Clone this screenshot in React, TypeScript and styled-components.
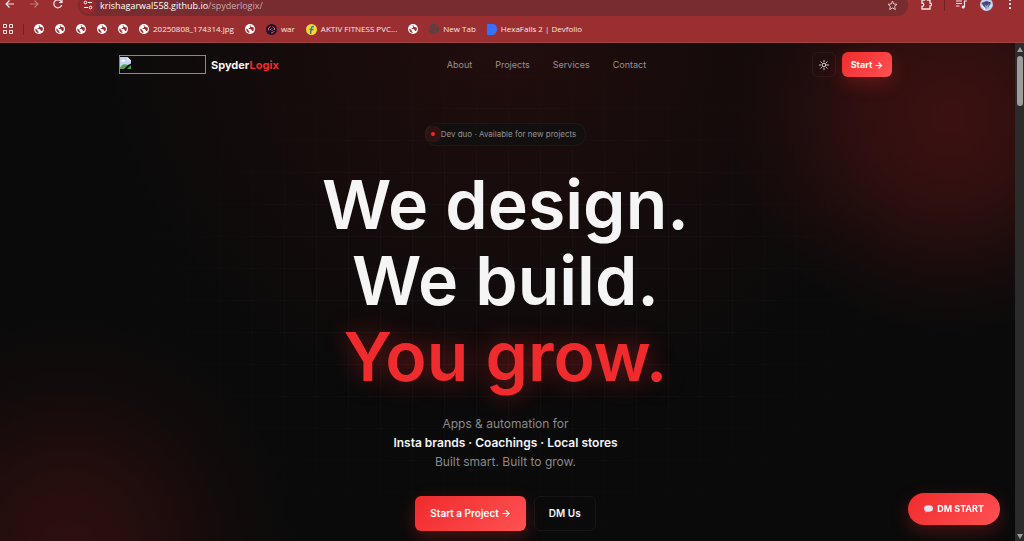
import React from "react";
import styled, { createGlobalStyle, css } from "styled-components";

const GlobalStyle = createGlobalStyle`
  * { box-sizing: border-box; }
  body { margin: 0; background: #0a0a0a; overflow: hidden; }
  button { border: 0; margin: 0; padding: 0; background: none; color: inherit; font: inherit; cursor: pointer; }
  a { color: inherit; text-decoration: none; }
  svg { display: block; flex: none; }
`;

const Window = styled.div`
  min-height: 100vh;
  display: flex;
  flex-direction: column;
  font-family: Inter, "Liberation Sans", sans-serif;
`;

/* Browser chrome */

const Chrome = styled.header`
  background: #9b2e30;
  color: #f8e6e6;
  border-bottom: 1px solid #9c4544;
  font-family: "Open Sans", "Noto Sans", sans-serif;
`;

const AddressRow = styled.div`
  display: flex;
  align-items: flex-end;
  height: 16px;
  overflow: hidden;
  padding: 0 12px 0 5px;
`;

const ToolButton = styled.button<{ $dim?: boolean; $gap?: number }>`
  display: flex;
  align-items: center;
  height: 24px;
  margin-right: ${(p) => p.$gap ?? 0}px;
  opacity: ${(p) => (p.$dim ? 0.4 : 1)};
`;

const AddressBar = styled.div`
  flex: 1;
  display: flex;
  align-items: center;
  gap: 4px;
  height: 22px;
  margin-right: 13px;
  padding: 0 10px 0 2px;
  border-radius: 11px;
  background: #782c2f;
`;

const SiteInfo = styled.button`
  display: grid;
  place-items: center;
  width: 16px;
  height: 18px;
  border-radius: 9px;
  background: #97292c;
`;

const Url = styled.div`
  flex: 1;
  padding-top: 2px;
  font-size: 9px;
  line-height: 10px;
  color: #ffffff;

  span { color: #cfa9aa; }
`;

const Divider = styled.i`
  width: 1px;
  height: 11px;
  background: #6f2023;
`;

const ToolDivider = styled(Divider)`
  align-self: flex-start;
  margin: 0 11px;
`;

const Bookmarks = styled.nav`
  display: flex;
  align-items: center;
  gap: 10px;
  height: 26px;
  padding: 0 3px;
`;

const BookmarkList = styled.div`
  display: flex;
  align-items: center;
  gap: 11px;
`;

const Bookmark = styled.a`
  display: flex;
  align-items: center;
  gap: 4px;
  font-size: 8px;
  line-height: 12px;
  white-space: nowrap;
`;

/* Page */

const Viewport = styled.div`
  flex: 1;
  display: flex;
`;

const Page = styled.div`
  flex: 1;
  position: relative;
  padding-right: 4px;
  background:
    radial-gradient(circle 220px at calc(100% - 65px) 75px, rgba(239, 40, 40, 0.22) 0%, rgba(239, 40, 40, 0.17) 35%, rgba(239, 40, 40, 0.05) 74%, transparent 100%),
    radial-gradient(circle 235px at 68px calc(100% + 4px), rgba(239, 40, 50, 0.16) 0%, rgba(239, 40, 40, 0.1) 36%, rgba(239, 40, 40, 0.03) 70%, transparent 100%),
    radial-gradient(ellipse 420px 380px at 50% 0, rgba(239, 40, 40, 0.1), transparent),
    #0a0a0a;

  &::before {
    content: "";
    position: absolute;
    inset: 0;
    background:
      linear-gradient(90deg, rgba(255, 255, 255, 0.024) 1px, transparent 1px) 28px 0 / 32px 32px,
      linear-gradient(rgba(255, 255, 255, 0.024) 1px, transparent 1px) 0 1px / 32px 32px;
    mask-image: radial-gradient(ellipse 42% 58% at 50% 50%, #000 40%, transparent 100%);
  }
`;

const Content = styled.div`
  position: relative;
  max-width: 773px;
  margin: 0 auto;
`;

const SiteNav = styled.div`
  display: grid;
  grid-template-columns: 1fr auto 1fr;
  align-items: center;
  height: 43px;
`;

const Brand = styled.a`
  display: flex;
  align-items: center;
  gap: 5px;
  font-size: 11px;
  line-height: 16px;
  font-weight: 700;
  color: #f5f5f5;

  em { font-style: normal; color: #ef2b2d; }
`;

const MissingLogo = styled.div`
  width: 87px;
  height: 19px;
  border: 1px solid #8a8a8a;
  padding: 1px 0;
`;

const Links = styled.nav`
  display: flex;
  gap: 23px;
  padding-left: 82px;
  font-size: 9px;
  line-height: 12px;
  color: #979292;
`;

const NavActions = styled.div`
  display: flex;
  justify-content: flex-end;
  gap: 6px;
`;

const primary = css`
  color: #ffffff;
  background: linear-gradient(135deg, #f02b2c, #ff5153);
  box-shadow: 0 6px 18px rgba(239, 43, 45, 0.28);
`;

const outline = css`
  color: #f5f5f5;
  border: 1px solid rgba(255, 255, 255, 0.05);
`;

const NavButton = styled.button<{ $primary?: boolean }>`
  display: grid;
  place-items: center;
  height: 25px;
  min-width: 24px;
  padding: 0 ${(p) => (p.$primary ? 9 : 0)}px;
  border-radius: 6px;
  font-size: 9px;
  line-height: 12px;
  font-weight: 700;
  ${(p) => (p.$primary ? primary : outline)}
`;

const Hero = styled.main`
  display: flex;
  flex-direction: column;
  align-items: center;
  padding: 37px 0 9px;
  text-align: center;
`;

const Badge = styled.div`
  display: flex;
  align-items: center;
  gap: 6px;
  height: 23px;
  padding: 0 9px 1px 5px;
  border: 1px solid rgba(255, 255, 255, 0.04);
  border-radius: 12px;
  background: #12100f;
  color: #979292;
  font-size: 8px;
  line-height: 12px;

  &::before {
    content: "";
    width: 4px;
    height: 4px;
    border-radius: 50%;
    background: #ef2b2d;
    box-shadow: 0 0 0 6px rgba(239, 43, 45, 0.13);
  }
`;

const Title = styled.h1`
  margin: 20px 0;
  font-size: 68px;
  line-height: 76px;
  font-weight: 600;
  color: #f5f5f5;

  span { display: block; }
  span:last-child {
    color: #ef2b2d;
    text-shadow: 0 0 26px rgba(239, 43, 45, 0.45);
  }
`;

const Lead = styled.p`
  margin: 0 0 25px;
  font-size: 12px;
  line-height: 19px;
  color: #8a8888;

  strong { display: block; font-weight: 600; color: #f5f5f5; }
`;

const Actions = styled.div`
  display: flex;
  gap: 8px;
`;

const ActionButton = styled.button<{ $primary?: boolean }>`
  height: 35px;
  padding: 0 ${(p) => (p.$primary ? 15 : 14)}px 2px;
  border-radius: 6px;
  font-size: 10px;
  line-height: 16px;
  font-weight: 600;
  ${(p) => (p.$primary ? primary : outline)}
`;

const ChatButton = styled.button`
  position: fixed;
  right: 24px;
  bottom: 16px;
  display: flex;
  align-items: center;
  gap: 4px;
  height: 32px;
  padding: 0 16px;
  border-radius: 16px;
  font-size: 9px;
  line-height: 12px;
  font-weight: 700;
  ${primary}
`;

const ScrollTrack = styled.div`
  display: flex;
  flex-direction: column;
  align-items: center;
  justify-content: space-between;
  width: 9px;
  padding: 4px 0 2px;
  background: #2b2b2b;
`;

const ScrollTop = styled.div`
  display: flex;
  flex-direction: column;
  align-items: center;
  gap: 4px;
`;

const ScrollThumb = styled.div`
  width: 6px;
  height: 50px;
  border-radius: 3px;
  background: #9d9d9d;
`;

/* Icons */

const Globe = () => (
  <svg width="10" height="10" viewBox="0 0 20 20">
    <circle cx="10" cy="10" r="10" fill="#fff" />
    <path d="M8 3.500 12 3v2l-2 1v2H7.500v2h4l2 2v2h2.500l1.500-2V7l-2.500-.5M2.600 9l4.400 3v2l2 1.500V18C5 17.500 2 14 2.600 9Z" fill="#9b2e30" />
  </svg>
);

const War = () => (
  <svg width="11" height="11" viewBox="0 0 22 22">
    <circle cx="11" cy="11" r="11" fill="#16152e" />
    <path d="M5 13V8l4-3M13 5l4 3v4M17 14l-3 3-4 1" fill="none" stroke="#e0526d" strokeWidth="2" />
    <path d="m8 12 3-3M11 14l3-3" stroke="#e0526d" strokeWidth="2" />
  </svg>
);

const Flip = () => (
  <svg width="11" height="11" viewBox="0 0 22 22">
    <circle cx="11" cy="11" r="11" fill="#fbd926" />
    <path d="M16 5h-2q-3 0-3.500 4L9 20M7 11h8" fill="none" stroke="#1d7fc4" strokeWidth="3" />
  </svg>
);

const ChromeMark = () => (
  <svg width="10" height="10" viewBox="0 0 20 20">
    <circle cx="10" cy="10" r="10" fill="#4d4644" />
    <circle cx="10" cy="10" r="4.500" fill="#4d4644" stroke="#8c3335" strokeWidth="2" />
    <path d="M10 5.500h9M6 12 2 5M14 12l-4 8" stroke="#8c3335" strokeWidth="2" />
  </svg>
);

const Devfolio = () => (
  <svg width="10" height="11" viewBox="0 0 20 22">
    <path d="M2 0h9c5 0 9 4 9 9.500 0 7-4 12.500-10 12.500H2q-2 0-2-2V2q0-2 2-2Z" fill="#3770ff" />
  </svg>
);

const Apps = () => (
  <svg width="10" height="10" viewBox="0 0 10 10" fill="none" stroke="currentColor">
    <path d="M.5.500h3v3h-3zM6.500.500h3v3h-3zM.5 6.500h3v3h-3zM6.500 6.500h3v3h-3z" />
  </svg>
);

const Arrow = ({ flip }: { flip?: boolean }) => (
  <svg width="10" height="10" viewBox="0 0 10 10" fill="none" stroke="currentColor" strokeWidth="1.200">
    <path d={flip ? "M1 5h8M5.500 1.500 9 5 5.500 8.500" : "M9 5H1M4.500 1.500 1 5l3.500 3.500"} />
  </svg>
);

const Reload = () => (
  <svg width="10" height="10" viewBox="0 0 10 10" fill="none" stroke="currentColor" strokeWidth="1.200">
    <path d="M8.700 6A4 4 0 1 1 8 2.300L9 3.500M9 .5v3H6" />
  </svg>
);

const Tune = () => (
  <svg width="10" height="10" viewBox="0 0 10 10" fill="none" stroke="#fff">
    <circle cx="2.500" cy="2.500" r="1.300" />
    <circle cx="7.500" cy="7.500" r="1.300" />
    <path d="M5 2.500h4M1 7.500h4" />
  </svg>
);

const Star = () => (
  <svg width="11" height="11" viewBox="0 0 11 11" fill="none" stroke="#e3c4c5">
    <path d="m5.500 1 1.300 3 3.200.3-2.400 2.100.7 3.200-2.800-1.700-2.800 1.700.7-3.200L1 4.300 4.200 4Z" />
  </svg>
);

const Puzzle = () => (
  <svg width="12" height="12" viewBox="0 0 12 12" fill="none" stroke="currentColor" strokeWidth="1.300">
    <path d="M1 2h2.500a1.500 1.500 0 0 1 3 0H9v3a1.500 1.500 0 0 1 0 3v3H1V8.500a1.700 1.700 0 0 0 0-3.500Z" />
  </svg>
);

const Queue = () => (
  <svg width="11" height="10" viewBox="0 0 11 10" fill="none" stroke="currentColor" strokeWidth="1.200">
    <path d="M0 2h6M0 4.500h6M0 7h3.500M8.500 8V2H11" />
    <circle cx="7.200" cy="8" r="1" fill="currentColor" />
  </svg>
);

const Avatar = () => (
  <svg width="13" height="13" viewBox="0 0 26 26">
    <circle cx="13" cy="13" r="13" fill="#c3cdf0" />
    <path d="m3 10 10-4 9 3-4 8-5 5-6-6Z" fill="#46486c" />
    <path d="m9 12 4 4 5-5-2 9-4 3Z" fill="#8ea5d8" />
    <path d="m3 16 5 3 2 5M19 18l4-4" stroke="#fff" strokeWidth="2" fill="none" />
  </svg>
);

const More = () => (
  <svg width="3" height="12" viewBox="0 0 3 12" fill="currentColor">
    <path d="M0 1h2v2H0zM0 5h2v2H0zM0 9h2v2H0z" />
  </svg>
);

const BrokenImage = () => (
  <svg width="11" height="12" viewBox="0 0 22 24">
    <path d="M0 0h15l7 7v6l-8 4-7 7H0Z" fill="#c4d6f4" />
    <path d="M15 0v7h7Z" fill="#f7f9fd" />
    <path d="M3 8q1-4 4-2 4-1 4 3H3Z" fill="#fff" />
    <path d="M0 21q5-9 13-6l2 2-8 7H0ZM16 22l6-6v8h-8Z" fill="#4da742" />
  </svg>
);

const Sun = () => (
  <svg width="10" height="10" viewBox="0 0 20 20" fill="none" stroke="#f5f5f5" strokeWidth="1.800" strokeLinecap="round">
    <circle cx="10" cy="10" r="3.800" />
    <path d="M10 1v2M10 17v2M1 10h2M17 10h2M3.600 3.600 5 5M15 15l1.400 1.400M3.600 16.400 5 15M15 5l1.400-1.400" />
  </svg>
);

const Bubble = () => (
  <svg width="9" height="8" viewBox="0 0 18 16">
    <ellipse cx="9" cy="7" rx="9" ry="6.500" fill="#e9e3f6" />
    <path d="M3 10v5l6-3Z" fill="#d5cbe8" />
  </svg>
);

const Caret = ({ down }: { down?: boolean }) => (
  <svg width="6" height="5" viewBox="0 0 6 5" fill="#9d9d9d">
    <path d={down ? "M0 0h6L3 5Z" : "M0 5h6L3 0Z"} />
  </svg>
);

const bookmarks: { icon: React.FC; label?: string }[] = [
  { icon: Globe },
  { icon: Globe },
  { icon: Globe },
  { icon: Globe },
  { icon: Globe },
  { icon: Globe, label: "20250808_174314.jpg" },
  { icon: Globe },
  { icon: War, label: "war" },
  { icon: Flip, label: "AKTIV FITNESS PVC..." },
  { icon: Globe },
  { icon: ChromeMark, label: "New Tab" },
  { icon: Devfolio, label: "HexaFalls 2 | Devfolio" },
];

export default function App() {
  return (
    <Window>
      <GlobalStyle />
      <Chrome>
        <AddressRow>
          <ToolButton aria-label="Back" $gap={14}><Arrow /></ToolButton>
          <ToolButton aria-label="Forward" $dim $gap={14}><Arrow flip /></ToolButton>
          <ToolButton aria-label="Reload" $gap={15}><Reload /></ToolButton>
          <AddressBar>
            <SiteInfo aria-label="Site information"><Tune /></SiteInfo>
            <Url>krishagarwal558.github.io<span>/spyderlogix/</span></Url>
            <Star />
          </AddressBar>
          <ToolButton aria-label="Extensions"><Puzzle /></ToolButton>
          <ToolDivider />
          <ToolButton aria-label="Media" $gap={13}><Queue /></ToolButton>
          <ToolButton aria-label="Profile" $gap={16}><Avatar /></ToolButton>
          <ToolButton aria-label="More"><More /></ToolButton>
        </AddressRow>
        <Bookmarks aria-label="Bookmarks">
          <Apps />
          <Divider />
          <BookmarkList>
            {bookmarks.map(({ icon: Icon, label }, i) => (
              <Bookmark href="#" key={i} aria-label={label ?? "Bookmark"}>
                <Icon />
                {label}
              </Bookmark>
            ))}
          </BookmarkList>
        </Bookmarks>
      </Chrome>

      <Viewport>
        <Page>
          <Content>
            <SiteNav>
              <Brand href="#">
                <MissingLogo><BrokenImage /></MissingLogo>
                <span>Spyder<em>Logix</em></span>
              </Brand>
              <Links>
                <a href="#about">About</a>
                <a href="#projects">Projects</a>
                <a href="#services">Services</a>
                <a href="#contact">Contact</a>
              </Links>
              <NavActions>
                <NavButton aria-label="Toggle theme"><Sun /></NavButton>
                <NavButton $primary>Start →</NavButton>
              </NavActions>
            </SiteNav>
            <Hero>
              <Badge>Dev duo · Available for new projects</Badge>
              <Title>
                <span>We design.</span>
                <span>We build.</span>
                <span>You grow.</span>
              </Title>
              <Lead>
                Apps &amp; automation for
                <strong>Insta brands · Coachings · Local stores</strong>
                Built smart. Built to grow.
              </Lead>
              <Actions>
                <ActionButton $primary>Start a Project →</ActionButton>
                <ActionButton>DM Us</ActionButton>
              </Actions>
            </Hero>
          </Content>
          <ChatButton><Bubble />DM START</ChatButton>
        </Page>
        <ScrollTrack aria-hidden="true">
          <ScrollTop>
            <Caret />
            <ScrollThumb />
          </ScrollTop>
          <Caret down />
        </ScrollTrack>
      </Viewport>
    </Window>
  );
}
